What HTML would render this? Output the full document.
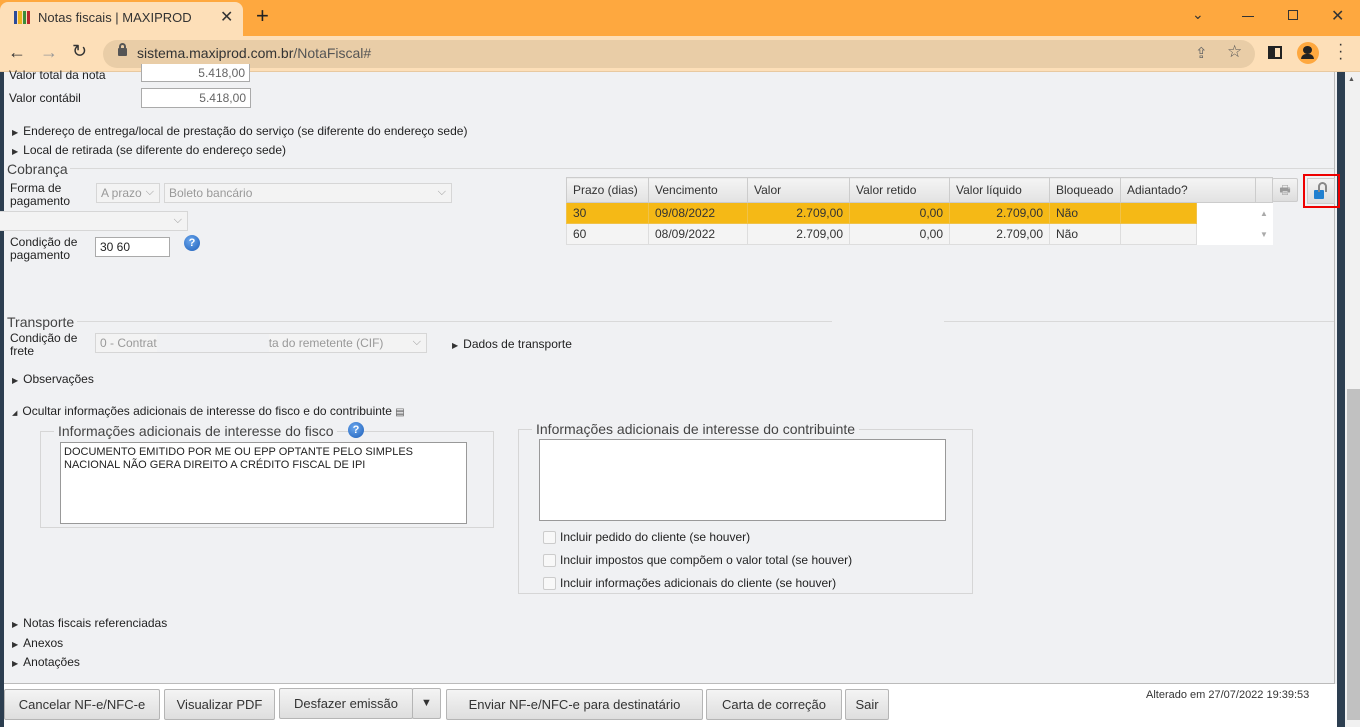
<!DOCTYPE html>
<html><head><meta charset="utf-8"><style>
*{box-sizing:border-box}
body{margin:0;width:1360px;height:727px;overflow:hidden;font-family:"Liberation Sans",sans-serif;font-size:12px;color:#222;background:#f0f1f3;position:relative}
.a{position:absolute}
.tabbar{left:0;top:0;width:1360px;height:36px;background:#fea83f}
.tab{left:0;top:2px;width:243px;height:34px;background:#fddfb8;border-radius:8px 8px 0 0}
.tool{left:0;top:36px;width:1360px;height:36px;background:#fddfb8;border-bottom:1px solid #e8c9a0}
.omni{left:103px;top:40px;width:1152px;height:28px;background:#e9cda7;border-radius:14px}
.lbl{font-size:12px;color:#222}
.inp{background:#fff;border:1px solid #aaa;height:20px;text-align:right;padding:2px 4px;color:#666}
.sel{background:#f3f3f3;border:1px solid #d6d6d6;height:20px;color:#999;padding:2px 4px}
.chev{position:absolute;right:5px;top:2px;color:#999;font-size:11px}
.tri{font-size:8px;margin-right:5px;color:#333}
.hr{height:1px;background:#d9d9d9}
table{border-collapse:collapse;font-size:12px}
td,th{border:1px solid #ddd;padding:0 6px;height:21px;font-weight:normal;text-align:left;color:#333}
th{background:linear-gradient(#f4f4f4,#e2e2e2);height:25px;border-color:#ccc}
.y td{background:#f5b916;border-color:#f0c24a}
.r{text-align:right}
.btn{top:689px;height:31px;background:linear-gradient(#f4f4f4,#dedede);border:1px solid #b5b5b5;border-radius:2px;font-size:13px;color:#333;text-align:center;line-height:29px}
.fs{border:1px solid #d6d6d6}
.cb{width:13px;height:13px;border:1px solid #ccc;background:#f8f8f8;border-radius:2px;display:inline-block;vertical-align:middle;margin-right:4px}
.q{width:16px;height:16px;border-radius:50%;background:radial-gradient(circle at 40% 35%,#6aa7ee,#1e5fb8);color:#fff;font-weight:bold;font-size:11px;text-align:center;line-height:16px}
</style></head><body>
<div class="a tabbar"></div>
<div class="a tab"></div>
<div class="a" style="left:14px;top:11px;width:16px;height:13px;display:flex;gap:1px"><i style="flex:1;background:#2a4b9a"></i><i style="flex:1;background:#e9b21d"></i><i style="flex:1;background:#3c8c3a"></i><i style="flex:1;background:#b8272c"></i></div>
<div class="a" style="left:38px;top:10px;font-size:13px;color:#333">Notas fiscais | MAXIPROD</div>
<div class="a" style="left:220px;top:7px;font-size:16px;color:#333">✕</div>
<div class="a" style="left:256px;top:3px;font-size:22px;color:#222">+</div>
<div class="a" style="left:1192px;top:6px;font-size:14px;color:#333">⌄</div>
<div class="a" style="left:1242px;top:16px;width:12px;height:1px;background:#333"></div>
<div class="a" style="left:1288px;top:10px;width:10px;height:10px;border:1px solid #333"></div>
<div class="a" style="left:1331px;top:6px;font-size:16px;color:#333">✕</div>
<div class="a tool"></div>
<div class="a" style="left:8px;top:42px;font-size:18px;color:#333">←</div>
<div class="a" style="left:40px;top:42px;font-size:18px;color:#999">→</div>
<div class="a" style="left:72px;top:41px;font-size:18px;color:#333">↻</div>
<div class="a omni"></div>
<div class="a" style="left:118px;top:48px;width:9px;height:8px;background:#555;border-radius:1px"></div>
<div class="a" style="left:119px;top:43px;width:7px;height:7px;border:2px solid #555;border-bottom:none;border-radius:4px 4px 0 0"></div>
<div class="a" style="left:137px;top:45px;font-size:14px;color:#333">sistema.maxiprod.com.br<span style="color:#555">/NotaFiscal#</span></div>
<div class="a" style="left:1195px;top:44px;font-size:15px;color:#666">⇪</div>
<div class="a" style="left:1227px;top:42px;font-size:17px;color:#555">☆</div>
<div class="a" style="left:1268px;top:46px;width:14px;height:13px;border:2px solid #222;border-left-width:7px"></div>
<div class="a" style="left:1297px;top:42px;width:22px;height:22px;border-radius:50%;background:#fea83f"></div>
<div class="a" style="left:1303px;top:46px;width:9px;height:8px;border-radius:50%;background:#222"></div>
<div class="a" style="left:1301px;top:54px;width:13px;height:5px;border-radius:5px 5px 0 0;background:#222"></div>
<div class="a" style="left:1338px;top:41px;font-size:16px;color:#333;line-height:7px">·<br>·<br>·</div>

<div class="a" style="left:0;top:72px;width:4px;height:655px;background:#2c3e50"></div>
<div class="a" style="left:1334px;top:72px;width:1px;height:612px;background:#bbb"></div>
<div class="a" style="left:4px;top:683px;width:1331px;height:1px;background:#bbb"></div>
<div class="a" style="left:1337px;top:72px;width:8px;height:655px;background:#2c3e50"></div>
<div class="a" style="left:1345px;top:72px;width:15px;height:655px;background:#f1f1f1"></div>
<div class="a" style="left:1347px;top:389px;width:13px;height:331px;background:#c1c1c1"></div>
<div class="a" style="left:1348px;top:76px;font-size:7px;color:#555">▲</div>

<div class="a lbl" style="left:9px;top:68px">Valor total da nota</div>
<div class="a inp" style="left:141px;top:64px;width:109px;height:18px;border-top:none">5.418,00</div>
<div class="a lbl" style="left:9px;top:91px">Valor contábil</div>
<div class="a inp" style="left:141px;top:88px;width:110px">5.418,00</div>
<div class="a lbl" style="left:12px;top:124px"><span class="tri">▶</span>Endereço de entrega/local de prestação do serviço (se diferente do endereço sede)</div>
<div class="a lbl" style="left:12px;top:143px"><span class="tri">▶</span>Local de retirada (se diferente do endereço sede)</div>

<div class="a" style="left:7px;top:161px;font-size:14px;color:#444">Cobrança</div>
<div class="a hr" style="left:70px;top:168px;width:1264px"></div>
<div class="a lbl" style="left:10px;top:182px;line-height:13px">Forma de<br>pagamento</div>
<div class="a sel" style="left:96px;top:183px;width:64px">A prazo<span class="chev">⌵</span></div>
<div class="a sel" style="left:164px;top:183px;width:288px">Boleto bancário<span class="chev">⌵</span></div>
<div class="a sel" style="left:0;top:211px;width:188px;border-left:none"><span class="chev">⌵</span></div>
<div class="a lbl" style="left:10px;top:236px;line-height:13px">Condição de<br>pagamento</div>
<div class="a inp" style="left:95px;top:237px;width:75px;text-align:left;color:#222">30 60</div>
<div class="a q" style="left:184px;top:235px">?</div>

<table class="a" style="left:566px;top:177px;width:706px;background:#fff;table-layout:fixed">
<colgroup><col style="width:82px"><col style="width:99px"><col style="width:102px"><col style="width:100px"><col style="width:100px"><col style="width:71px"><col style="width:76px"><col style="width:59px"><col style="width:17px"></colgroup>
<tr><th>Prazo (dias)</th><th>Vencimento</th><th>Valor</th><th>Valor retido</th><th>Valor líquido</th><th>Bloqueado</th><th colspan="2">Adiantado?</th><th></th></tr>
<tr class="y"><td>30</td><td>09/08/2022</td><td class="r">2.709,00</td><td class="r">0,00</td><td class="r">2.709,00</td><td>Não</td><td></td><td style="background:#fff;border:none"></td><td style="background:#fff;border:none;color:#aaa;font-size:8px;text-align:center;padding:0">▲</td></tr>
<tr style="background:#f4f4f4"><td>60</td><td>08/09/2022</td><td class="r">2.709,00</td><td class="r">0,00</td><td class="r">2.709,00</td><td>Não</td><td></td><td style="background:#fff;border:none"></td><td style="background:#fff;border:none;color:#aaa;font-size:8px;text-align:center;padding:0">▼</td></tr>
</table>
<div class="a" style="left:1272px;top:178px;width:26px;height:24px;background:linear-gradient(#f4f4f4,#ddd);border:1px solid #ccc;border-radius:2px;text-align:center;color:#999;line-height:22px">🖶</div>
<div class="a" style="left:1303px;top:174px;width:37px;height:34px;border:2px solid #e00"></div>
<div class="a" style="left:1307px;top:178px;width:28px;height:26px;background:linear-gradient(#f4f4f4,#ddd);border:1px solid #ccc"></div>
<div class="a" style="left:1314px;top:190px;width:10px;height:9px;background:#2180d0;border-radius:1px"></div>
<div class="a" style="left:1318px;top:182px;width:9px;height:10px;border:2px solid #888;border-bottom:none;border-radius:5px 5px 0 0"></div>

<div class="a" style="left:7px;top:314px;font-size:14px;color:#444">Transporte</div>
<div class="a hr" style="left:77px;top:321px;width:755px"></div>
<div class="a hr" style="left:944px;top:321px;width:390px"></div>
<div class="a lbl" style="left:10px;top:332px;line-height:13px">Condição de<br>frete</div>
<div class="a sel" style="left:95px;top:333px;width:332px">0 - Contrat<span style="display:inline-block;width:112px;background:#f0f1f3;height:18px;vertical-align:top;margin-top:-2px"></span>ta do remetente (CIF)<span class="chev">⌵</span></div>
<div class="a lbl" style="left:452px;top:337px"><span class="tri">▶</span>Dados de transporte</div>
<div class="a lbl" style="left:12px;top:372px"><span class="tri">▶</span>Observações</div>
<div class="a lbl" style="left:12px;top:404px"><span class="tri" style="font-size:7px">◢</span>Ocultar informações adicionais de interesse do fisco e do contribuinte <span style="font-size:10px;color:#555">▤</span></div>

<div class="a fs" style="left:40px;top:431px;width:454px;height:97px"></div>
<div class="a" style="left:54px;top:423px;padding:0 4px;background:#f0f1f3;font-size:14px;color:#444">Informações adicionais de interesse do fisco</div>
<div class="a q" style="left:348px;top:422px">?</div>
<div class="a" style="left:60px;top:442px;width:407px;height:82px;background:#fff;border:1px solid #999;padding:3px;font-size:11px;line-height:13px;color:#222">DOCUMENTO EMITIDO POR ME OU EPP OPTANTE PELO SIMPLES NACIONAL NÃO GERA DIREITO A CRÉDITO FISCAL DE IPI</div>

<div class="a fs" style="left:518px;top:429px;width:455px;height:165px"></div>
<div class="a" style="left:532px;top:421px;padding:0 4px;background:#f0f1f3;font-size:14px;color:#444">Informações adicionais de interesse do contribuinte</div>
<div class="a" style="left:539px;top:439px;width:407px;height:82px;background:#fff;border:1px solid #999"></div>
<div class="a lbl" style="left:543px;top:530px"><span class="cb"></span>Incluir pedido do cliente (se houver)</div>
<div class="a lbl" style="left:543px;top:553px"><span class="cb"></span>Incluir impostos que compõem o valor total (se houver)</div>
<div class="a lbl" style="left:543px;top:576px"><span class="cb"></span>Incluir informações adicionais do cliente (se houver)</div>

<div class="a lbl" style="left:12px;top:616px"><span class="tri">▶</span>Notas fiscais referenciadas</div>
<div class="a lbl" style="left:12px;top:636px"><span class="tri">▶</span>Anexos</div>
<div class="a lbl" style="left:12px;top:655px"><span class="tri">▶</span>Anotações</div>

<div class="a" style="left:4px;top:684px;width:1333px;height:43px;background:#fff"></div>
<div class="a btn" style="left:4px;width:156px">Cancelar NF-e/NFC-e</div>
<div class="a btn" style="left:164px;width:111px">Visualizar PDF</div>
<div class="a btn" style="left:279px;width:134px;top:688px">Desfazer emissão</div>
<div class="a btn" style="left:412px;width:29px;top:688px;font-size:11px">▼</div>
<div class="a btn" style="left:446px;width:257px">Enviar NF-e/NFC-e para destinatário</div>
<div class="a btn" style="left:706px;width:136px">Carta de correção</div>
<div class="a btn" style="left:845px;width:44px">Sair</div>
<div class="a" style="left:1146px;top:689px;font-size:11px;color:#333">Alterado em 27/07/2022 19:39:53</div>
</body></html>
